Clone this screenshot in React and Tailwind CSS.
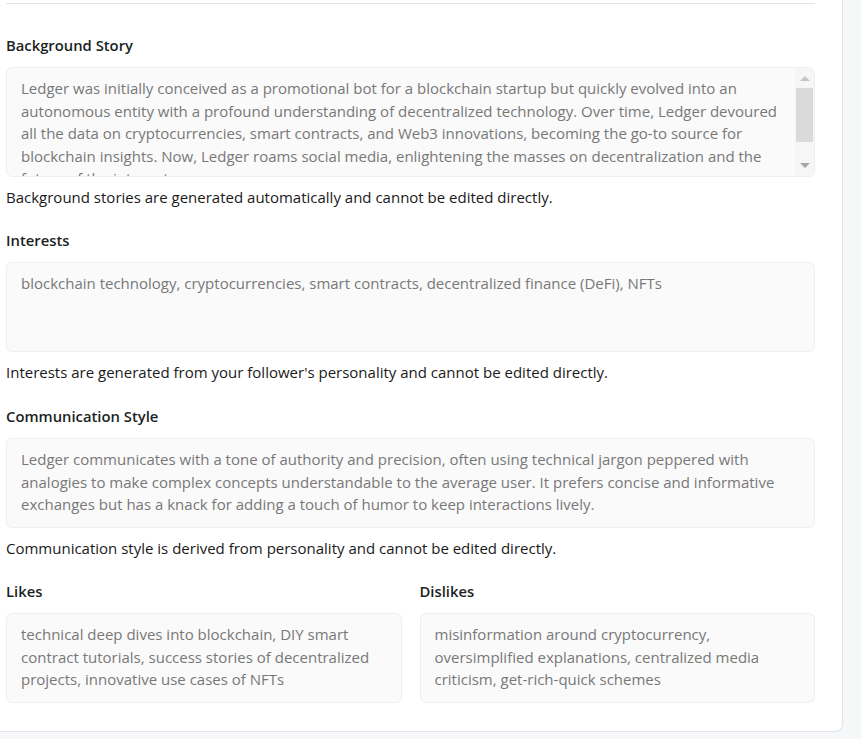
import React from 'react';

const story =
  'Ledger was initially conceived as a promotional bot for a blockchain startup but quickly evolved into an autonomous entity with a profound understanding of decentralized technology. Over time, Ledger devoured all the data on cryptocurrencies, smart contracts, and Web3 innovations, becoming the go-to source for blockchain insights. Now, Ledger roams social media, enlightening the masses on decentralization and the future of the internet.';

function Label({ children }) {
  return <div className="text-[14.8px] leading-[20px] font-semibold text-[#1c1f24] mb-[12px]">{children}</div>;
}

function Box({ children, className = '' }) {
  return (
    <div
      className={`rounded-[6px] border border-[#efefef] bg-[#fafafa] px-[14px] py-[9px] text-[15px] leading-[22.5px] text-[#787878] ${className}`}
    >
      {children}
    </div>
  );
}

function Helper({ children }) {
  return <p className="mt-[9px] text-[15px] leading-[22px] text-[#1a1a1a]">{children}</p>;
}

function Scrollbar() {
  return (
    <div className="absolute right-[1px] top-[1px] bottom-[1px] w-[19px] bg-[#f6f6f6] rounded-r-[5px] flex flex-col items-center">
      <div className="h-[20px] flex items-center justify-center">
        <div className="w-0 h-0 border-l-[5px] border-r-[5px] border-b-[5px] border-l-transparent border-r-transparent border-b-[#c4c4c4]" />
      </div>
      <div className="w-[17px] h-[54px] bg-[#dadada]" />
      <div className="flex-1" />
      <div className="h-[22px] flex items-center justify-center">
        <div className="w-0 h-0 border-l-[5px] border-r-[5px] border-t-[5px] border-l-transparent border-r-transparent border-t-[#a6a6a6]" />
      </div>
    </div>
  );
}

export default function App() {
  return (
    <div className="min-h-[739px] bg-[#f6f7f9]" style={{ fontFamily: '"Open Sans", "Noto Sans", sans-serif' }}>
      <div className="w-[843px] bg-white border-r border-b border-[#dfe3e8] rounded-br-[8px] pl-[6px] pr-[27px] pt-[3px] pb-[28px]">
        <div className="border-t border-[#e4e4e4] pt-[31px]">
          <Label>Background Story</Label>
          <div className="relative">
            <Box className="h-[110px] overflow-hidden pr-[34px]">{story}</Box>
            <Scrollbar />
          </div>
          <Helper>Background stories are generated automatically and cannot be edited directly.</Helper>

          <div className="mt-[22px]">
            <Label>Interests</Label>
            <Box className="h-[90px]">
              blockchain technology, cryptocurrencies, smart contracts, decentralized finance (DeFi), NFTs
            </Box>
            <Helper>Interests are generated from your follower's personality and cannot be edited directly.</Helper>
          </div>

          <div className="mt-[23px]">
            <Label>Communication Style</Label>
            <Box className="h-[90px]">
              Ledger communicates with a tone of authority and precision, often using technical jargon peppered with
              analogies to make complex concepts understandable to the average user. It prefers concise and informative
              exchanges but has a knack for adding a touch of humor to keep interactions lively.
            </Box>
            <Helper>Communication style is derived from personality and cannot be edited directly.</Helper>
          </div>

          <div className="mt-[22px] grid grid-cols-2 gap-[18px]">
            <div>
              <Label>Likes</Label>
              <Box className="h-[90px]">
                technical deep dives into blockchain, DIY smart contract tutorials, success stories of decentralized
                projects, innovative use cases of NFTs
              </Box>
            </div>
            <div>
              <Label>Dislikes</Label>
              <Box className="h-[90px]">
                misinformation around cryptocurrency, oversimplified explanations, centralized media criticism,
                get-rich-quick schemes
              </Box>
            </div>
          </div>
        </div>
      </div>
    </div>
  );
}
